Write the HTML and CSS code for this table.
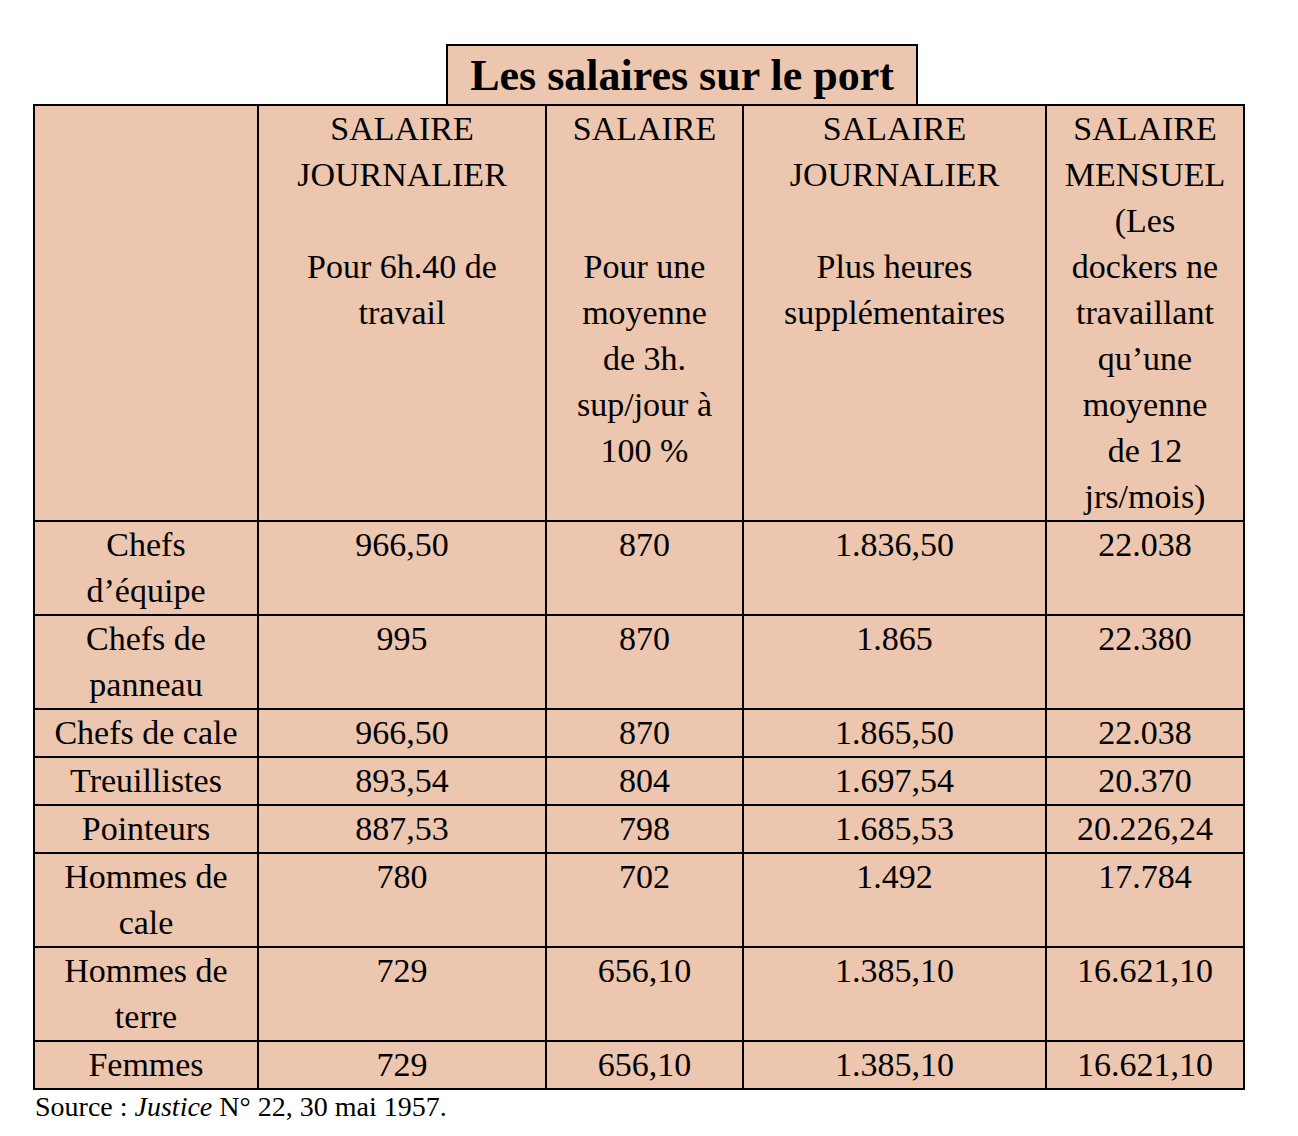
FILE: index.html
```html
<!DOCTYPE html>
<html lang="fr">
<head>
<meta charset="utf-8">
<title>Les salaires sur le port</title>
<link rel="stylesheet" href="styles.css">
</head>
<body>
<div class="page">
  <div class="title-box">Les salaires sur le port</div>
  <table class="wages">
    <colgroup>
      <col class="c1"><col class="c2"><col class="c3"><col class="c4"><col class="c5">
    </colgroup>
    <thead>
      <tr>
        <th></th>
        <th>SALAIRE<br>JOURNALIER<br><br>Pour 6h.40 de<br>travail</th>
        <th>SALAIRE<br><br><br>Pour une<br>moyenne<br>de 3h.<br>sup/jour à<br>100 %</th>
        <th>SALAIRE<br>JOURNALIER<br><br>Plus heures<br>supplémentaires</th>
        <th>SALAIRE<br>MENSUEL<br>(Les<br>dockers ne<br>travaillant<br>qu’une<br>moyenne<br>de 12<br>jrs/mois)</th>
      </tr>
    </thead>
    <tbody>
      <tr><td>Chefs<br>d’équipe</td><td>966,50</td><td>870</td><td>1.836,50</td><td>22.038</td></tr>
      <tr><td>Chefs de<br>panneau</td><td>995</td><td>870</td><td>1.865</td><td>22.380</td></tr>
      <tr><td>Chefs de cale</td><td>966,50</td><td>870</td><td>1.865,50</td><td>22.038</td></tr>
      <tr><td>Treuillistes</td><td>893,54</td><td>804</td><td>1.697,54</td><td>20.370</td></tr>
      <tr><td>Pointeurs</td><td>887,53</td><td>798</td><td>1.685,53</td><td>20.226,24</td></tr>
      <tr><td>Hommes de<br>cale</td><td>780</td><td>702</td><td>1.492</td><td>17.784</td></tr>
      <tr><td>Hommes de<br>terre</td><td>729</td><td>656,10</td><td>1.385,10</td><td>16.621,10</td></tr>
      <tr><td>Femmes</td><td>729</td><td>656,10</td><td>1.385,10</td><td>16.621,10</td></tr>
    </tbody>
  </table>
  <p class="source">Source : <em>Justice</em> N° 22, 30 mai 1957.</p>
</div>
</body>
</html>
```

FILE: styles.css
```css
html, body {
  margin: 0;
  padding: 0;
  background: #ffffff;
}

body {
  font-family: "Liberation Serif", "Times New Roman", serif;
  color: #000000;
}

.page {
  padding: 44px 0 0 33px;
  width: 1210px;
}

.title-box {
  margin-left: 413px;
  width: 468px;
  height: 58px;
  border: 2px solid #000;
  border-bottom: none;
  background: #ecc6af;
  font-weight: bold;
  font-size: 44px;
  line-height: 60px;
  text-align: center;
  box-sizing: content-box;
}

.wages {
  border-collapse: collapse;
  width: 1210px;
  table-layout: fixed;
  background: #ecc6af;
  font-size: 34px;
  line-height: 46px;
}

.c1 { width: 224px; }
.c2 { width: 288px; }
.c3 { width: 197px; }
.c4 { width: 303px; }
.c5 { width: 198px; }

.wages th,
.wages td {
  border: 2px solid #000;
  padding: 0;
  text-align: center;
  vertical-align: top;
  font-weight: normal;
  white-space: nowrap;
}

.source {
  margin: 0;
  padding-left: 2px;
  font-size: 28px;
  line-height: 34px;
}

.source em {
  font-style: italic;
}
```
